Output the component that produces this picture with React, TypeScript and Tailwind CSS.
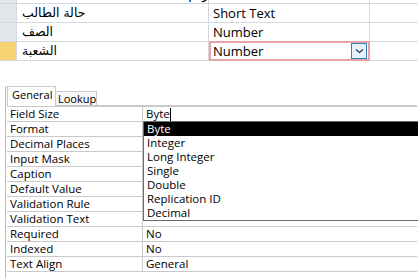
import React from 'react';

const topRows = [
	{ label: 'حالة الطالب', type: 'Short Text', current: false },
	{ label: 'الصف', type: 'Number', current: false },
	{ label: 'الشعبة', type: 'Number', current: true },
];

const props: [string, string][] = [
	['Field Size', 'Byte'],
	['Format', ''],
	['Decimal Places', ''],
	['Input Mask', ''],
	['Caption', ''],
	['Default Value', ''],
	['Validation Rule', ''],
	['Validation Text', ''],
	['Required', 'No'],
	['Indexed', 'No'],
	['Text Align', 'General'],
];

const sizes = ['Byte', 'Integer', 'Long Integer', 'Single', 'Double', 'Replication ID', 'Decimal'];

const Chevron = () => (
	<svg width="9" height="6" viewBox="0 0 9 6">
		<path d="M1 1.5 L4.5 4.5 L8 1.5" fill="none" stroke="#1f3b57" strokeWidth="1.2" />
	</svg>
);

const App = () => {
	return (
		<div className="relative w-[418px] h-[278px] overflow-hidden bg-white text-black [font-family:'Open_Sans','Noto_Sans',sans-serif]">
			{/* table design grid */}
			<div className="flex flex-col">
				<div className="flex h-[4px] border-b border-[#d4d9e1] overflow-hidden">
					<div className="w-[17px] bg-[#e3e6eb] border-r border-[#d4d9e1]" />
					<div className="w-[192px] border-r border-[#d4d9e1] relative overflow-hidden">
						<span className="absolute left-[140px] top-[-12px] text-[12px] leading-[14px] [font-family:'DejaVu_Sans',sans-serif]" dir="rtl">
							رقم الهوية
						</span>
					</div>
					<div className="w-[161px] border-r border-[#d4d9e1]" />
				</div>
				{topRows.map(row => (
					<div key={row.label} className="flex h-[19px] border-b border-[#d4d9e1]">
						<div className={`w-[17px] border-r border-[#d4d9e1] ${row.current ? 'bg-[#f9d272]' : 'bg-[#e3e6eb]'}`} />
						<div className="w-[192px] border-r border-[#d4d9e1] pl-[5px] flex items-center">
							<span className="text-[12.5px] leading-none [font-family:'DejaVu_Sans',sans-serif]" dir="rtl">
								{row.label}
							</span>
						</div>
						{row.current ? (
							<div className="w-[161px] border-[2px] border-[#e8a3a9] -my-px flex items-center justify-between pl-[2px] pr-[1px] bg-white z-10">
								<span className="text-[13px] leading-none">{row.type}</span>
								<div className="w-[16px] h-[16px] border border-[#3c7fb1] bg-[#e5f1fb] flex items-center justify-center">
									<Chevron />
								</div>
							</div>
						) : (
							<div className="w-[161px] border-r border-[#d4d9e1] pl-[4px] flex items-center">
								<span className="text-[13px] leading-none">{row.type}</span>
							</div>
						)}
					</div>
				))}
			</div>

			{/* field properties */}
			<div className="mt-[25px] ml-[5px] border-l border-[#b9b9b9] h-[200px] pl-[1px]">
				<div className="flex items-end h-[20px]">
					<div className="h-[20px] w-[49px] border border-b-0 border-[#c9c9c9] bg-white flex items-start pl-[4px] pt-[1px] text-[11px] leading-[14px] relative z-10">
						General
					</div>
					<div className="h-[15px] w-[41px] border border-l-0 border-b-0 border-[#c9c9c9] bg-[#f7f7f7] flex items-start pl-[2px] text-[11px] leading-[14px]">
						Lookup
					</div>
				</div>
				<div className="relative border-t-[2px] border-double border-[#c9c9c9] w-[410px] -mt-px">
					{props.map(([name, value], i) => (
						<div key={name} className="flex h-[15px] border-b border-[#c9c9c9]">
							<div className="w-[136px] border-r border-[#c9c9c9] pl-[3px] text-[11.5px] leading-[14px] whitespace-nowrap">
								{name}
							</div>
							<div className="flex-1 pl-[3px] text-[11.5px] leading-[14px] whitespace-nowrap flex items-center">
								{value}
								{i === 0 && <span className="inline-block w-px h-[13px] bg-black" />}
							</div>
						</div>
					))}

					{/* open dropdown list */}
					<div className="absolute left-[136px] top-[14px] w-[290px] h-[100px] border border-[#6b6b6b] bg-white">
						{sizes.map((s, i) => (
							<div
								key={s}
								className={`h-[14px] pl-[3px] text-[11.5px] leading-[14px] ${i === 0 ? 'bg-black text-white' : ''}`}
							>
								{s}
							</div>
						))}
					</div>
				</div>
			</div>
		</div>
	);
};

export default App;
